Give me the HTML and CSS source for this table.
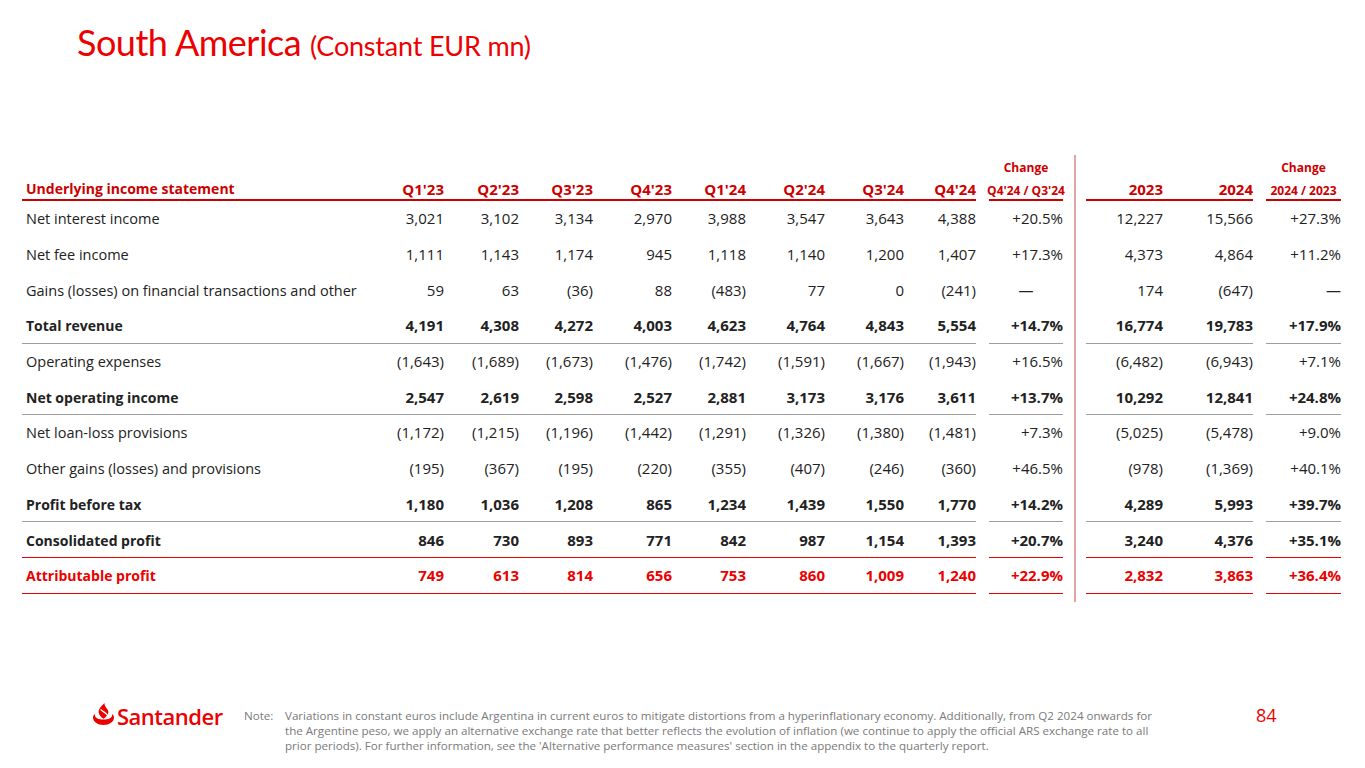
FILE: index.html
```html
<!DOCTYPE html>
<html lang="en">
<head>
<meta charset="utf-8">
<title>South America (Constant EUR mn)</title>
<link rel="stylesheet" href="styles.css">
</head>
<body>
<div class="slide">
  <h1 class="title">South America <span class="sub">(Constant EUR mn)</span></h1>

  <div class="tbl">
    <div class="divider"></div>

    <div class="row hd">
      <div class="lab">Underlying income statement</div>
      <div>Q1'23</div><div>Q2'23</div><div>Q3'23</div><div>Q4'23</div>
      <div>Q1'24</div><div>Q2'24</div><div>Q3'24</div><div>Q4'24</div>
      <div class="chg ch"><span class="ch-top">Change</span><span>Q4'24 / Q3'24</span></div>
      <div class="y1">2023</div><div>2024</div>
      <div class="chg ch"><span class="ch-top">Change</span><span>2024 / 2023</span></div>
    </div>

    <div class="row">
      <div class="lab">Net interest income</div>
      <div>3,021</div><div>3,102</div><div>3,134</div><div>2,970</div><div>3,988</div><div>3,547</div><div>3,643</div><div>4,388</div>
      <div class="chg">+20.5%</div><div class="y1">12,227</div><div>15,566</div><div class="chg">+27.3%</div>
    </div>

    <div class="row">
      <div class="lab">Net fee income</div>
      <div>1,111</div><div>1,143</div><div>1,174</div><div>945</div><div>1,118</div><div>1,140</div><div>1,200</div><div>1,407</div>
      <div class="chg">+17.3%</div><div class="y1">4,373</div><div>4,864</div><div class="chg">+11.2%</div>
    </div>

    <div class="row">
      <div class="lab">Gains (losses) on financial transactions and other</div>
      <div>59</div><div>63</div><div>(36)</div><div>88</div><div>(483)</div><div>77</div><div>0</div><div>(241)</div>
      <div class="chg mid">—</div><div class="y1">174</div><div>(647)</div><div class="chg">—</div>
    </div>

    <div class="row bold sep">
      <div class="lab">Total revenue</div>
      <div>4,191</div><div>4,308</div><div>4,272</div><div>4,003</div><div>4,623</div><div>4,764</div><div>4,843</div><div>5,554</div>
      <div class="chg">+14.7%</div><div class="y1">16,774</div><div>19,783</div><div class="chg">+17.9%</div>
    </div>

    <div class="row">
      <div class="lab">Operating expenses</div>
      <div>(1,643)</div><div>(1,689)</div><div>(1,673)</div><div>(1,476)</div><div>(1,742)</div><div>(1,591)</div><div>(1,667)</div><div>(1,943)</div>
      <div class="chg">+16.5%</div><div class="y1">(6,482)</div><div>(6,943)</div><div class="chg">+7.1%</div>
    </div>

    <div class="row bold sep">
      <div class="lab">Net operating income</div>
      <div>2,547</div><div>2,619</div><div>2,598</div><div>2,527</div><div>2,881</div><div>3,173</div><div>3,176</div><div>3,611</div>
      <div class="chg">+13.7%</div><div class="y1">10,292</div><div>12,841</div><div class="chg">+24.8%</div>
    </div>

    <div class="row">
      <div class="lab">Net loan-loss provisions</div>
      <div>(1,172)</div><div>(1,215)</div><div>(1,196)</div><div>(1,442)</div><div>(1,291)</div><div>(1,326)</div><div>(1,380)</div><div>(1,481)</div>
      <div class="chg">+7.3%</div><div class="y1">(5,025)</div><div>(5,478)</div><div class="chg">+9.0%</div>
    </div>

    <div class="row">
      <div class="lab">Other gains (losses) and provisions</div>
      <div>(195)</div><div>(367)</div><div>(195)</div><div>(220)</div><div>(355)</div><div>(407)</div><div>(246)</div><div>(360)</div>
      <div class="chg">+46.5%</div><div class="y1">(978)</div><div>(1,369)</div><div class="chg">+40.1%</div>
    </div>

    <div class="row bold sep">
      <div class="lab">Profit before tax</div>
      <div>1,180</div><div>1,036</div><div>1,208</div><div>865</div><div>1,234</div><div>1,439</div><div>1,550</div><div>1,770</div>
      <div class="chg">+14.2%</div><div class="y1">4,289</div><div>5,993</div><div class="chg">+39.7%</div>
    </div>

    <div class="row bold redline">
      <div class="lab">Consolidated profit</div>
      <div>846</div><div>730</div><div>893</div><div>771</div><div>842</div><div>987</div><div>1,154</div><div>1,393</div>
      <div class="chg">+20.7%</div><div class="y1">3,240</div><div>4,376</div><div class="chg">+35.1%</div>
    </div>

    <div class="row bold redline red">
      <div class="lab">Attributable profit</div>
      <div>749</div><div>613</div><div>814</div><div>656</div><div>753</div><div>860</div><div>1,009</div><div>1,240</div>
      <div class="chg">+22.9%</div><div class="y1">2,832</div><div>3,863</div><div class="chg">+36.4%</div>
    </div>
  </div>

  <footer class="foot">
    <div class="brand">
      <svg class="flame" viewBox="0 0 21 22" width="21" height="22" aria-hidden="true">
        <path d="M0 14.5C0 18.8 4.7 22 10.5 22C16.3 22 21 18.8 21 14.5C21 13 20.2 11.8 19 11C19.1 11.4 19.1 11.8 19.1 12.2C19.1 14.8 15.3 16.6 10.5 16.6C5.7 16.6 1.9 14.8 1.9 12.2C1.9 11.8 1.9 11.4 2 11C0.8 11.8 0 13 0 14.5Z" fill="#ec0000"/>
        <path d="M11.4 0C9.2 2.8 5.6 5.2 5.6 9C5.6 12 8.2 14 10.4 15.8C12.8 14 15.4 12 15.4 9C15.4 6 11.4 4.4 11.4 0Z" fill="#ec0000"/>
        <path d="M7.6 6.4C9.6 8.8 13.4 9.6 14.6 12.6" fill="none" stroke="#ffffff" stroke-width="1.3"/>
      </svg>
      <span class="brand-name">Santander</span>
    </div>
    <div class="note-label">Note:</div>
    <p class="note">Variations in constant euros include Argentina in current euros to mitigate distortions from a hyperinflationary economy. Additionally, from Q2 2024 onwards for<br>the Argentine peso, we apply an alternative exchange rate that better reflects the evolution of inflation (we continue to apply the official ARS exchange rate to all<br>prior periods). For further information, see the 'Alternative performance measures' section in the appendix to the quarterly report.</p>
    <div class="page-num">84</div>
  </footer>
</div>
</body>
</html>
```

FILE: styles.css
```css
html, body {
  margin: 0;
  padding: 0;
  background: #ffffff;
}

.slide {
  width: 1365px;
  height: 768px;
  display: flex;
  flex-direction: column;
  font-family: "Open Sans", "Noto Sans", sans-serif;
  color: #222222;
  overflow: hidden;
}

.title {
  margin: 0;
  padding: 18px 0 0 77px;
  font-family: "Lato", "Open Sans", sans-serif;
  font-weight: 400;
  font-size: 36px;
  line-height: 48px;
  letter-spacing: -0.5px;
  color: #ec0000;
}

.title .sub {
  font-size: 27px;
  letter-spacing: -0.2px;
}

/* ---------- table ---------- */
.tbl {
  display: grid;
  grid-template-columns: 338px 84px 75px 74px 79px 74px 79px 79px 72px 87px 23px 77px 90px 88px;
  grid-template-rows: 48px repeat(11, 35.7px);
  width: max-content;
  margin: 83px 0 0 22px;
  font-size: 15px;
}

.divider {
  grid-column: 11;
  grid-row: 1 / span 12;
  justify-self: center;
  width: 2px;
  margin: 2px 0 -8px;
  background: #e2a4a4;
}

.row {
  display: contents;
}

.row > div {
  box-sizing: border-box;
  display: flex;
  align-items: center;
  justify-content: flex-end;
  white-space: nowrap;
  border-bottom: 1px solid transparent;
}

.row > .lab {
  justify-content: flex-start;
  padding-left: 4px;
  padding-top: 1px;
  font-size: 14.5px;
}

.row > .chg {
  margin-left: 13px;
}

.row > .mid {
  justify-content: center;
}

.row.bold > div {
  font-weight: 700;
}

.row.bold > .lab {
  font-size: 14px;
}

.row.sep > div {
  border-bottom-color: #9e9e9e;
}

.row.redline > div {
  border-bottom-color: #ec0000;
}

.row.red > div {
  color: #ec0000;
}

/* header */
.row.hd > div {
  align-items: flex-end;
  font-weight: 700;
  font-size: 15px;
  line-height: 20px;
  color: #cc0000;
  border-bottom: 2px solid #cc0000;
}

.row.hd > .lab {
  font-size: 14px;
  padding-top: 0;
}

.row.hd > .ch {
  flex-direction: column;
  justify-content: flex-end;
  align-items: center;
  font-size: 12px;
  line-height: 16px;
}

.ch-top {
  margin-bottom: 7px;
}

/* ---------- footer ---------- */
.foot {
  margin-top: auto;
  display: flex;
  align-items: flex-start;
  padding: 0 0 15px 93px;
}

.brand {
  width: 131px;
  display: flex;
  align-items: flex-end;
  gap: 3px;
  margin-right: 20px;
}

.flame {
  display: block;
  flex: none;
}

.brand-name {
  font-family: "Open Sans", sans-serif;
  font-weight: 600;
  font-size: 22px;
  line-height: 24px;
  color: #ec0000;
  letter-spacing: -0.5px;
  margin-bottom: -3px;
}

.note-label,
.note {
  font-size: 11.6px;
  line-height: 15px;
  color: #7a7a7a;
  margin: 5px 0 0;
}

.note-label {
  width: 41px;
}

.note {
  width: 900px;
  white-space: nowrap;
}

.page-num {
  margin-left: 71px;
  font-size: 18px;
  line-height: 24px;
  color: #ec0000;
}
```
